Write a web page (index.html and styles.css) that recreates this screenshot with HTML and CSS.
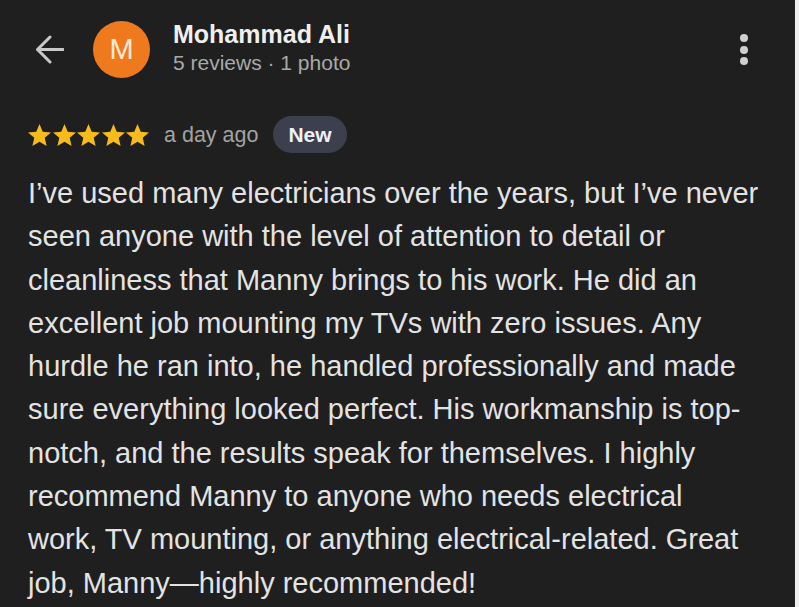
FILE: index.html
```html
<!DOCTYPE html>
<html lang="en">
<head>
<meta charset="utf-8">
<title>Review</title>
<link rel="stylesheet" href="styles.css">
</head>
<body>
<div class="screen">
  <header class="header">
    <svg class="back" width="29" height="29" viewBox="0 0 29 29" aria-hidden="true">
      <path d="M28 14.5H2.5M15 2 2.5 14.5 15 27" fill="none" stroke="#c9c9c9" stroke-width="3" stroke-linecap="round" stroke-linejoin="round"/>
    </svg>
    <div class="avatar">M</div>
    <div class="info">
      <div class="name">Mohammad Ali</div>
      <div class="sub">5 reviews · 1 photo</div>
    </div>
    <div class="menu" aria-label="More">
      <span class="dot"></span><span class="dot"></span><span class="dot"></span>
    </div>
  </header>
  <div class="meta">
    <div class="stars">
      <svg class="star" viewBox="2 2 20 19"><path d="M12 17.27L18.18 21l-1.64-7.03L22 9.24l-7.19-.61L12 2 9.19 8.63 2 9.24l5.46 4.73L5.82 21z"/></svg>
      <svg class="star" viewBox="2 2 20 19"><path d="M12 17.27L18.18 21l-1.64-7.03L22 9.24l-7.19-.61L12 2 9.19 8.63 2 9.24l5.46 4.73L5.82 21z"/></svg>
      <svg class="star" viewBox="2 2 20 19"><path d="M12 17.27L18.18 21l-1.64-7.03L22 9.24l-7.19-.61L12 2 9.19 8.63 2 9.24l5.46 4.73L5.82 21z"/></svg>
      <svg class="star" viewBox="2 2 20 19"><path d="M12 17.27L18.18 21l-1.64-7.03L22 9.24l-7.19-.61L12 2 9.19 8.63 2 9.24l5.46 4.73L5.82 21z"/></svg>
      <svg class="star" viewBox="2 2 20 19"><path d="M12 17.27L18.18 21l-1.64-7.03L22 9.24l-7.19-.61L12 2 9.19 8.63 2 9.24l5.46 4.73L5.82 21z"/></svg>
    </div>
    <span class="ago">a day ago</span>
    <span class="pill">New</span>
  </div>
  <p class="text">
    <span class="line">I’ve used many electricians over the years, but I’ve never</span>
    <span class="line">seen anyone with the level of attention to detail or</span>
    <span class="line">cleanliness that Manny brings to his work. He did an</span>
    <span class="line">excellent job mounting my TVs with zero issues. Any</span>
    <span class="line">hurdle he ran into, he handled professionally and made</span>
    <span class="line">sure everything looked perfect. His workmanship is top-</span>
    <span class="line">notch, and the results speak for themselves. I highly</span>
    <span class="line">recommend Manny to anyone who needs electrical</span>
    <span class="line">work, TV mounting, or anything electrical-related. Great</span>
    <span class="line">job, Manny—highly recommended!</span>
  </p>
</div>
</body>
</html>
```
FILE: styles.css
```css
html, body {
  margin: 0;
  padding: 0;
  background: #efefef;
}
.screen {
  width: 795px;
  height: 607px;
  overflow: hidden;
  background: #1f1f1f;
  font-family: "Liberation Sans", Arial, sans-serif;
  color: #e2e2e2;
}
.header {
  display: flex;
  align-items: center;
  padding: 21px 47px 0 35px;
}
.back {
  display: block;
  flex: none;
  margin-right: 29px;
}
.avatar {
  flex: none;
  width: 57px;
  height: 57px;
  border-radius: 50%;
  background: #ef7a1e;
  color: #fbe9d8;
  font-size: 29px;
  line-height: 57px;
  text-align: center;
}
.info {
  margin-left: 23px;
  display: flex;
  flex-direction: column;
  align-self: flex-start;
  margin-top: -1px;
}
.name {
  font-size: 25px;
  font-weight: bold;
  line-height: 28px;
  color: #efefef;
}
.sub {
  margin-top: 2px;
  font-size: 21px;
  line-height: 26px;
  color: #a9a9a9;
}
.menu {
  margin-left: auto;
  display: flex;
  flex-direction: column;
  gap: 3.5px;
  align-self: flex-start;
  margin-top: 13px;
}
.dot {
  display: block;
  width: 8px;
  height: 8px;
  border-radius: 50%;
  background: #cfcfcf;
}
.meta {
  display: flex;
  align-items: center;
  margin: 38px 0 0 28px;
}
.stars {
  display: flex;
  gap: 1.5px;
}
.star {
  display: block;
  width: 23px;
  height: 22px;
  fill: #f7bb1c;
}
.ago {
  margin-left: 15px;
  font-size: 21.5px;
  color: #a3a3a3;
  line-height: 26px;
}
.pill {
  margin-left: 15px;
  height: 37px;
  padding: 0 15px;
  border-radius: 19px;
  background: #3c404e;
  color: #eef0f5;
  font-size: 21px;
  font-weight: bold;
  line-height: 37px;
}
.text {
  margin: 19px 0 0 28px;
  font-size: 29px;
  line-height: 43.3px;
  color: #e3e3e3;
}
.line {
  display: block;
  white-space: nowrap;
}
```
